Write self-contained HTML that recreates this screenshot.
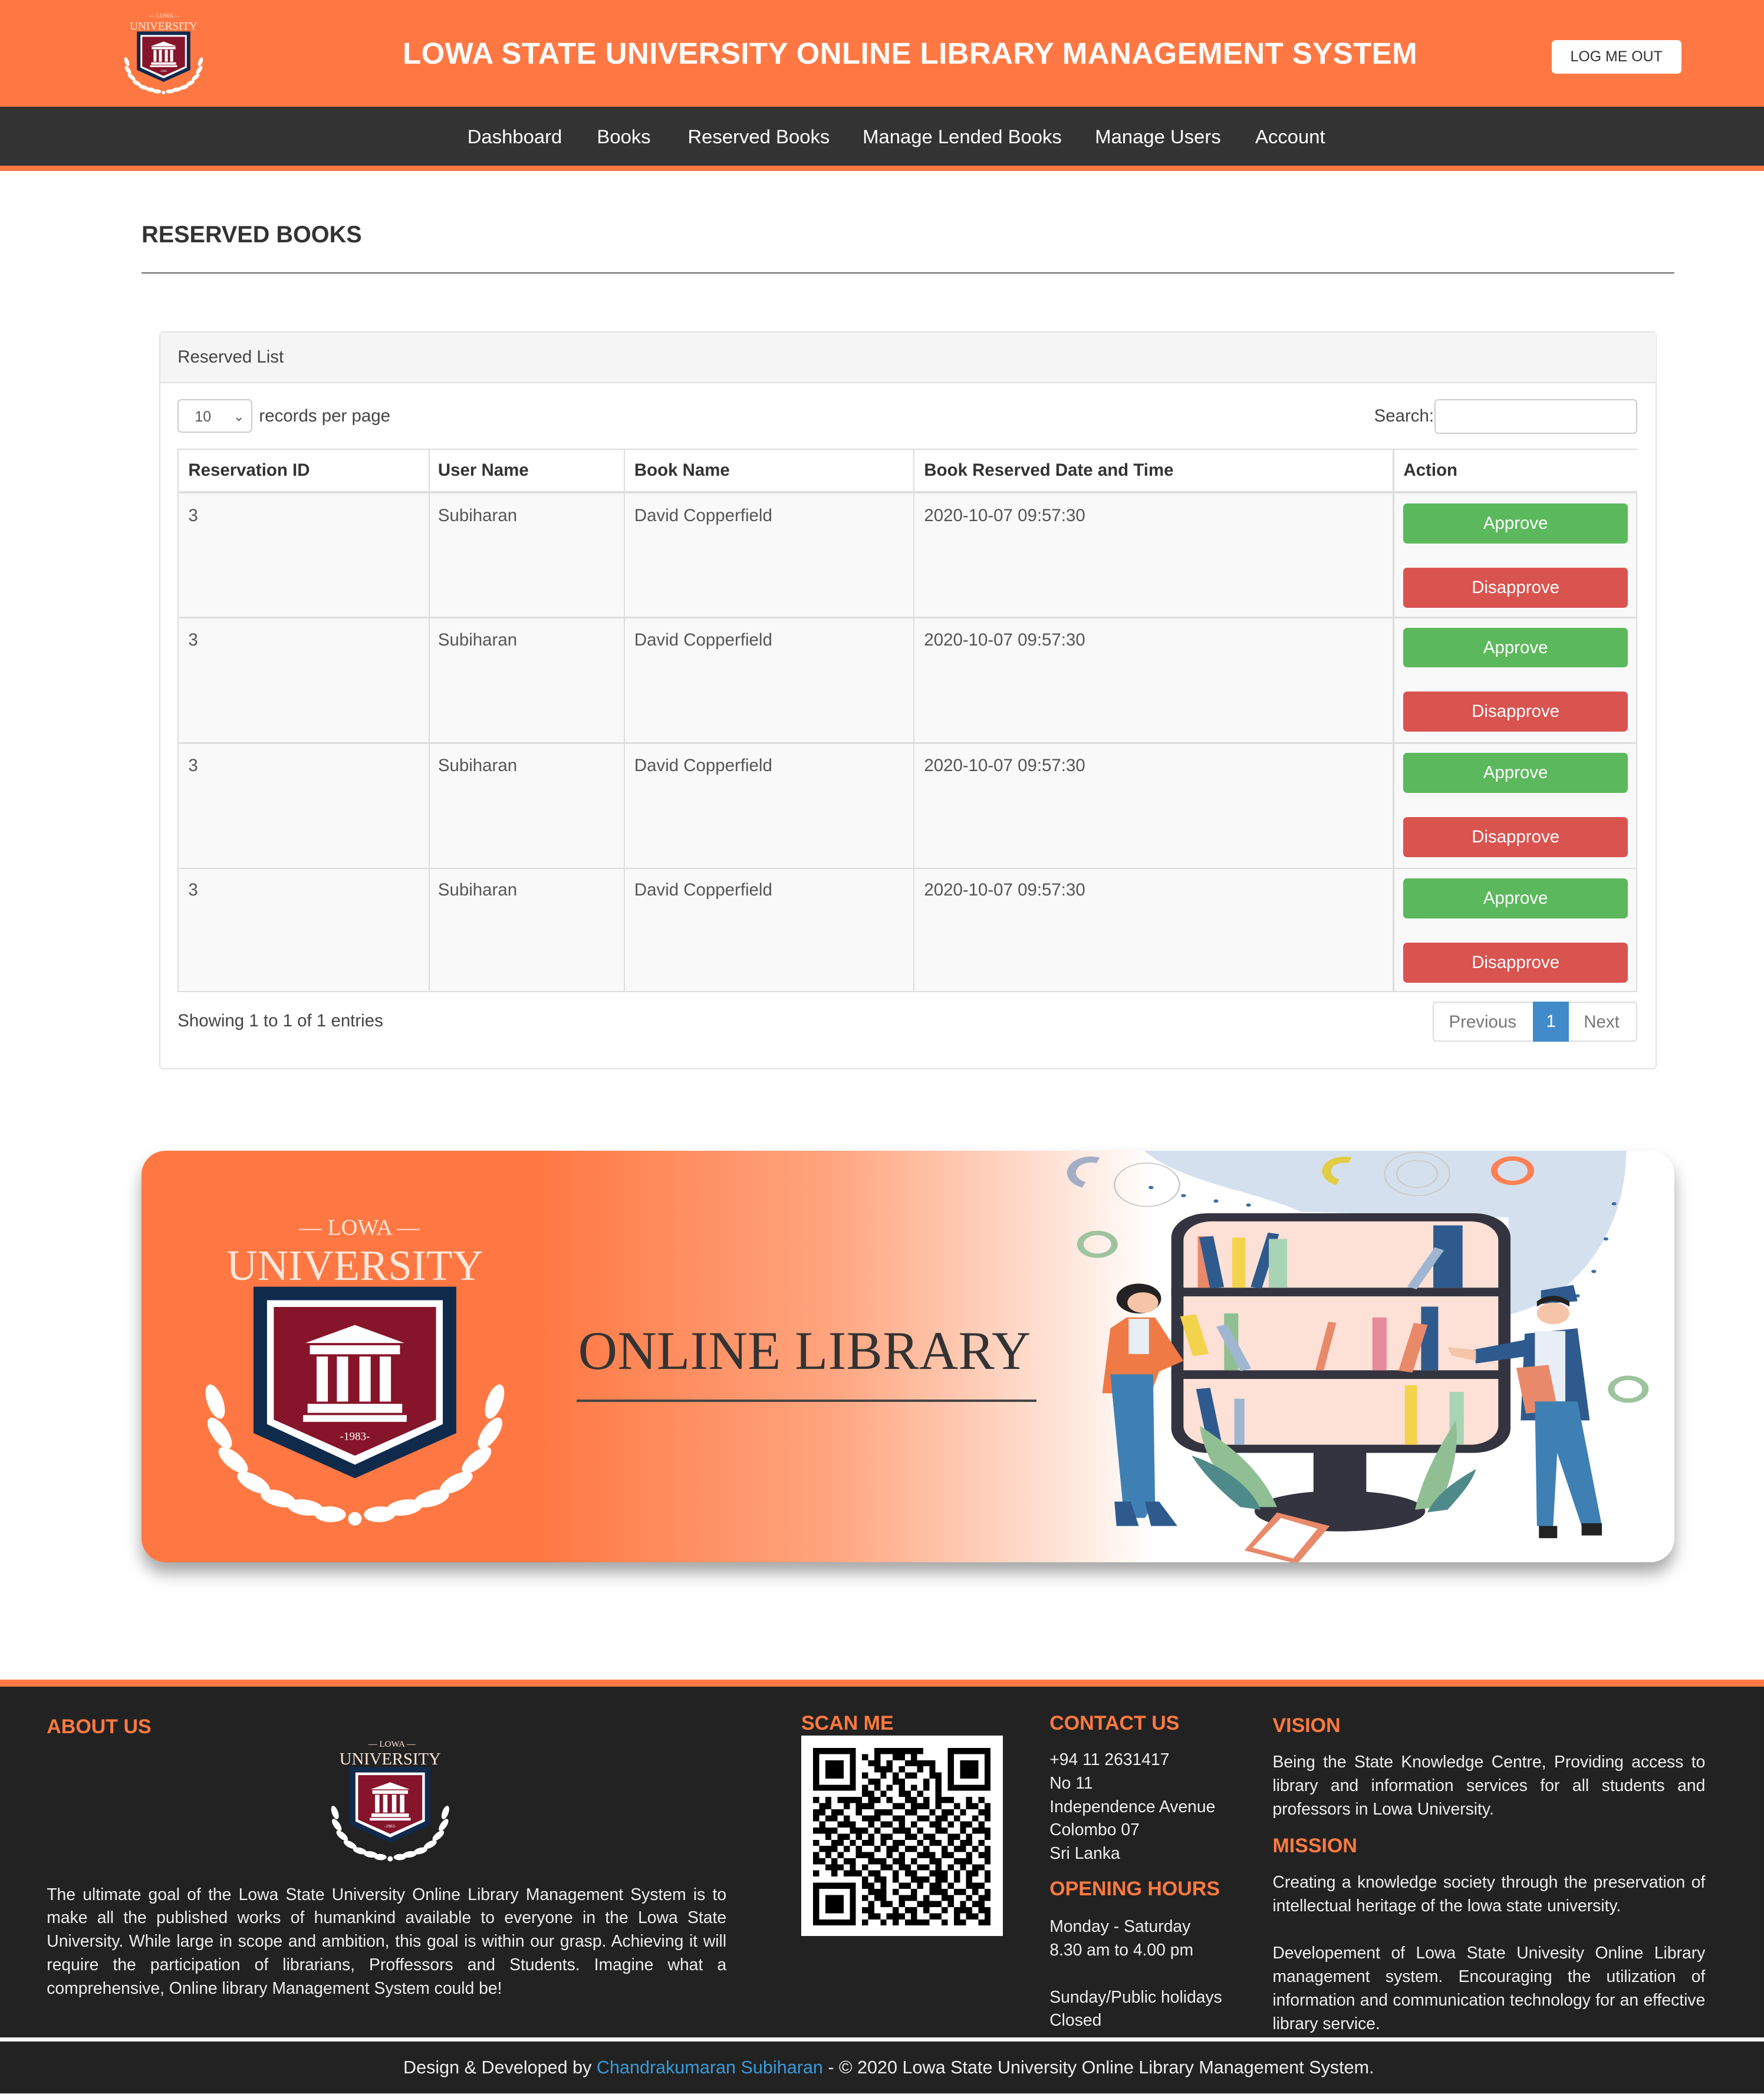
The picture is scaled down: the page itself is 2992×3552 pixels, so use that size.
<!DOCTYPE html>
<html><head><meta charset="utf-8">
<style>
html,body{margin:0;padding:0;width:2992px;height:3552px;overflow:hidden;background:#fff}
#w{position:relative;width:1321px;height:1568px;zoom:2.26495;font-family:"Liberation Sans",sans-serif;color:#333;overflow:hidden}
.a{position:absolute}
.nav span{position:absolute;top:93px;color:#fff;font-size:14.5px}
.cell{position:absolute;font-size:13px;color:#555}
.th{position:absolute;font-size:13px;font-weight:bold;color:#333;top:345px}
.btn{position:absolute;left:1051px;width:168px;height:30px;border-radius:3px;color:#fff;font-size:13px;text-align:center;line-height:30px}
.g{background:#5cb85c}.r{background:#d9534f}
.ft{position:absolute;color:#eee;font-size:12.5px;line-height:17.6px}
.oh{position:absolute;color:#ff7a40;font-weight:bold;font-size:15px}
</style></head><body><div id="w">

<svg width="0" height="0" style="position:absolute"><defs>
<g id="logo">
<text x="80" y="30" font-family="Liberation Serif,serif" font-size="10" fill="#fde8dc" text-anchor="middle">— LOWA —</text>
<text x="78" y="50" font-family="Liberation Serif,serif" font-size="19" fill="#fde8dc" text-anchor="middle">UNIVERSITY</text>
<path d="M33 53H123V118L78 138L33 118Z" fill="#102a4c"/>
<path d="M39 59H117V114L78 132L39 114Z" fill="#fff"/>
<path d="M42 62H114V112L78 128L42 112Z" fill="#86142a"/>
<path d="M78 70L100 78H56Z" fill="#fff"/><rect x="58" y="79" width="40" height="4" fill="#fff"/>
<rect x="61" y="84" width="5" height="20" fill="#fff"/><rect x="70" y="84" width="5" height="20" fill="#fff"/><rect x="80" y="84" width="5" height="20" fill="#fff"/><rect x="89" y="84" width="5" height="20" fill="#fff"/>
<rect x="57" y="105" width="42" height="4" fill="#fff"/><rect x="55" y="110" width="46" height="3" fill="#fff"/>
<text x="78" y="121" font-size="5" fill="#fff" text-anchor="middle" font-family="Liberation Serif,serif">-1983-</text>
<g fill="#fff">
<ellipse cx="16" cy="104" rx="3.5" ry="8" transform="rotate(-20 16 104)"/><ellipse cx="18" cy="118" rx="3.5" ry="8" transform="rotate(-35 18 118)"/><ellipse cx="24" cy="130" rx="3.5" ry="8" transform="rotate(-50 24 130)"/><ellipse cx="33" cy="140" rx="3.5" ry="8" transform="rotate(-62 33 140)"/><ellipse cx="44" cy="147" rx="3.5" ry="8" transform="rotate(-75 44 147)"/><ellipse cx="56" cy="151" rx="3.5" ry="8" transform="rotate(-82 56 151)"/><ellipse cx="67" cy="154" rx="3.5" ry="7" transform="rotate(-88 67 154)"/>
<ellipse cx="140" cy="104" rx="3.5" ry="8" transform="rotate(20 140 104)"/><ellipse cx="138" cy="118" rx="3.5" ry="8" transform="rotate(35 138 118)"/><ellipse cx="132" cy="130" rx="3.5" ry="8" transform="rotate(50 132 130)"/><ellipse cx="123" cy="140" rx="3.5" ry="8" transform="rotate(62 123 140)"/><ellipse cx="112" cy="147" rx="3.5" ry="8" transform="rotate(75 112 147)"/><ellipse cx="100" cy="151" rx="3.5" ry="8" transform="rotate(82 100 151)"/><ellipse cx="89" cy="154" rx="3.5" ry="7" transform="rotate(88 89 154)"/>
<circle cx="78" cy="156" r="3"/></g>
</g></defs></svg>

<!-- header -->
<div class="a" style="left:0;top:0;width:1321px;height:80px;background:#ff7843"></div>
<svg class="a" style="left:88px;top:0" width="80" height="80" viewBox="0 0 180 180"><use href="#logo"/></svg>
<div class="a" style="left:200px;width:963px;top:27px;text-align:center;color:#fff;font-weight:bold;font-size:22.5px;letter-spacing:0.2px">LOWA STATE UNIVERSITY ONLINE LIBRARY MANAGEMENT SYSTEM</div>
<div class="a" style="left:1162px;top:30px;width:97px;height:25px;background:#fff;border-radius:3px;font-size:11px;text-align:center;line-height:25px;color:#333">LOG ME OUT</div>
<div class="a nav" style="left:0;top:80px;width:1321px;height:44px;background:#333">
<span style="left:350px;top:14px">Dashboard</span><span style="left:447px;top:14px">Books</span><span style="left:515px;top:14px">Reserved Books</span><span style="left:646px;top:14px">Manage Lended Books</span><span style="left:820px;top:14px">Manage Users</span><span style="left:940px;top:14px">Account</span></div>
<div class="a" style="left:0;top:124px;width:1321px;height:4px;background:#ff7843"></div>

<div class="a" style="left:106px;top:166px;font-size:17.5px;font-weight:bold;color:#333">RESERVED BOOKS</div>
<div class="a" style="left:106px;top:204px;width:1148px;height:1px;background:#666"></div>

<!-- panel -->
<div class="a" style="left:119px;top:248px;width:1120px;height:551px;border:1px solid #e2e2e2;border-radius:3px"></div>
<div class="a" style="left:120px;top:249px;width:1120px;height:37px;background:#f5f5f5;border-bottom:1px solid #e2e2e2"></div>
<div class="a" style="left:133px;top:260px;font-size:13px;color:#444">Reserved List</div>
<div class="a" style="left:133px;top:299px;width:56px;height:25px;border:1px solid #ccc;border-radius:3px;font-size:11px;color:#555;line-height:25px;box-sizing:border-box;padding-left:12px">10<span style="position:absolute;right:5px;font-size:10px">⌄</span></div>
<div class="a" style="left:194px;top:304px;font-size:13px;color:#444">records per page</div>
<div class="a" style="left:1029px;top:304px;font-size:13px;color:#444">Search:</div>
<div class="a" style="left:1074px;top:299px;width:152px;height:26px;border:1px solid #ccc;border-radius:3px;box-sizing:border-box"></div>

<!-- table -->
<div class="a" style="left:133px;top:336px;width:1093px;height:407px;border:1px solid #ddd;box-sizing:border-box;background:#f9f9f9"></div>
<div class="a" style="left:134px;top:337px;width:1092px;height:31px;background:#fff;border-bottom:2px solid #ddd"></div>
<div class="a" style="left:134px;top:462px;width:1092px;height:1px;background:#ddd"></div>
<div class="a" style="left:134px;top:556px;width:1092px;height:1px;background:#ddd"></div>
<div class="a" style="left:134px;top:650px;width:1092px;height:1px;background:#ddd"></div>
<div class="a" style="left:321px;top:336px;width:1px;height:407px;background:#ddd"></div>
<div class="a" style="left:467px;top:336px;width:1px;height:407px;background:#ddd"></div>
<div class="a" style="left:684px;top:336px;width:1px;height:407px;background:#ddd"></div>
<div class="a" style="left:1043px;top:336px;width:1px;height:407px;background:#ddd"></div>
<div class="th" style="left:141px">Reservation ID</div><div class="th" style="left:328px">User Name</div><div class="th" style="left:475px">Book Name</div><div class="th" style="left:692px">Book Reserved Date and Time</div><div class="th" style="left:1051px">Action</div>

<div class="cell" style="left:141px;top:379px">3</div><div class="cell" style="left:328px;top:379px">Subiharan</div><div class="cell" style="left:475px;top:379px">David Copperfield</div><div class="cell" style="left:692px;top:379px">2020-10-07 09:57:30</div>
<div class="btn g" style="top:377px">Approve</div><div class="btn r" style="top:425px">Disapprove</div>
<div class="cell" style="left:141px;top:472px">3</div><div class="cell" style="left:328px;top:472px">Subiharan</div><div class="cell" style="left:475px;top:472px">David Copperfield</div><div class="cell" style="left:692px;top:472px">2020-10-07 09:57:30</div>
<div class="btn g" style="top:470px">Approve</div><div class="btn r" style="top:518px">Disapprove</div>
<div class="cell" style="left:141px;top:566px">3</div><div class="cell" style="left:328px;top:566px">Subiharan</div><div class="cell" style="left:475px;top:566px">David Copperfield</div><div class="cell" style="left:692px;top:566px">2020-10-07 09:57:30</div>
<div class="btn g" style="top:564px">Approve</div><div class="btn r" style="top:612px">Disapprove</div>
<div class="cell" style="left:141px;top:659px">3</div><div class="cell" style="left:328px;top:659px">Subiharan</div><div class="cell" style="left:475px;top:659px">David Copperfield</div><div class="cell" style="left:692px;top:659px">2020-10-07 09:57:30</div>
<div class="btn g" style="top:658px">Approve</div><div class="btn r" style="top:706px">Disapprove</div>

<div class="a" style="left:133px;top:757px;font-size:13px;color:#444">Showing 1 to 1 of 1 entries</div>
<div class="a" style="left:1073px;top:750px;width:153px;height:30px;border:1px solid #ddd;border-radius:3px;box-sizing:border-box"></div>
<div class="a" style="left:1085px;top:758px;font-size:13px;color:#777">Previous</div>
<div class="a" style="left:1148px;top:750px;width:27px;height:30px;background:#428bca;color:#fff;font-size:13px;text-align:center;line-height:30px">1</div>
<div class="a" style="left:1186px;top:758px;font-size:13px;color:#777">Next</div>

<!-- banner -->
<div class="a" style="left:106px;top:862px;width:1148px;height:308px;border-radius:18px;overflow:hidden;box-shadow:0 8px 12px rgba(0,0,0,0.35);background:linear-gradient(90deg,#ff7843 0%,#ff7843 26%,#ffa57f 45%,#ffe4d8 60%,#fff 66%,#fff 100%)">
<svg class="a" style="left:28px;top:12px" width="264" height="270" viewBox="0 0 156 160"><use href="#logo"/></svg>
<div class="a" style="left:327px;top:126px;font-family:'Liberation Serif',serif;font-size:40.5px;color:#333;letter-spacing:0.2px">ONLINE LIBRARY</div>
<div class="a" style="left:326px;top:186px;width:344px;height:2px;background:#444"></div>
<svg class="a" style="left:680px;top:-1px" width="477" height="318" viewBox="0 0 1568 1568" preserveAspectRatio="none">
<path d="M230 0H1420C1420 300 1300 550 1130 610V250L620 230C500 150 320 120 230 0Z" fill="#d4e0ee"/>
<g fill="#3b6ea5"><circle cx="250" cy="140" r="6"/><circle cx="330" cy="170" r="6"/><circle cx="410" cy="190" r="6"/><circle cx="490" cy="205" r="6"/><circle cx="1390" cy="200" r="6"/><circle cx="1370" cy="330" r="6"/><circle cx="1340" cy="450" r="6"/><circle cx="1300" cy="540" r="6"/><circle cx="1230" cy="620" r="6"/></g>
<circle cx="240" cy="130" r="80" fill="none" stroke="#ccc" stroke-width="4"/><circle cx="905" cy="90" r="80" fill="none" stroke="#ccc" stroke-width="4"/><circle cx="905" cy="90" r="50" fill="none" stroke="#ccc" stroke-width="4"/>
<circle cx="118" cy="350" r="42" fill="none" stroke="#9ec39f" stroke-width="16"/><circle cx="1425" cy="885" r="42" fill="none" stroke="#9ec39f" stroke-width="16"/><circle cx="1140" cy="78" r="45" fill="none" stroke="#ff8055" stroke-width="16"/>
<path d="M740 40A40 40 0 1 0 710 120" fill="none" stroke="#e2cc44" stroke-width="22"/><path d="M120 40A40 40 0 1 0 85 130" fill="none" stroke="#a3aec6" stroke-width="22"/>
<rect x="300" y="235" width="835" height="885" rx="90" fill="#343440"/><rect x="330" y="265" width="775" height="825" rx="70" fill="#fde0d6"/>
<rect x="300" y="510" width="835" height="32" fill="#343440"/><rect x="300" y="815" width="835" height="32" fill="#343440"/>
<rect x="650" y="1120" width="130" height="170" fill="#343440"/><ellipse cx="715" cy="1335" rx="210" ry="75" fill="#343440"/>
<rect x="365" y="320" width="38" height="190" fill="#e8896a"/><rect x="395" y="320" width="35" height="190" fill="#2e5a8e" transform="rotate(-8 412 510)"/><rect x="450" y="325" width="32" height="185" fill="#f2d34b"/><rect x="495" y="305" width="28" height="205" fill="#2e5a8e" transform="rotate(12 509 510)"/><rect x="540" y="330" width="45" height="180" fill="#a8d3b4"/><rect x="945" y="280" width="72" height="230" fill="#2e5a8e"/><rect x="880" y="350" width="25" height="160" fill="#9fb6d0" transform="rotate(25 890 510)"/>
<rect x="430" y="605" width="35" height="210" fill="#8fbf93"/><rect x="470" y="640" width="28" height="175" fill="#9fb6d0" transform="rotate(-20 480 815)"/><rect x="795" y="620" width="35" height="195" fill="#e78a9c"/><rect x="915" y="580" width="42" height="235" fill="#2e5a8e"/><rect x="860" y="640" width="35" height="180" fill="#e8896a" transform="rotate(12 878 815)"/><rect x="655" y="635" width="20" height="180" fill="#e8896a" transform="rotate(10 665 815)"/>
<rect x="390" y="880" width="35" height="210" fill="#2e5a8e" transform="rotate(-8 408 1090)"/><rect x="455" y="920" width="25" height="170" fill="#9fb6d0"/><rect x="875" y="870" width="30" height="220" fill="#f2d34b"/><rect x="985" y="895" width="35" height="195" fill="#a8d3b4"/>
<path d="M370 1020C450 1100 520 1180 560 1320L500 1320C420 1230 380 1130 370 1020Z" fill="#8fbf93"/><path d="M350 1130C430 1170 500 1250 520 1330L470 1320C420 1260 380 1200 350 1130Z" fill="#4f8a8b"/>
<path d="M1000 1000C960 1100 920 1200 900 1330L960 1320C990 1220 1010 1100 1000 1000Z" fill="#8fbf93"/><path d="M1050 1180C990 1230 950 1280 930 1340L980 1330C1010 1280 1040 1230 1050 1180Z" fill="#4f8a8b"/>
<path d="M480 1480L560 1340L690 1390L610 1530Z" fill="#e8896a"/><path d="M500 1470L570 1360L660 1400L600 1510Z" fill="#fff"/>
<circle cx="220" cy="550" r="55" fill="#222"/><circle cx="230" cy="565" r="38" fill="#f6c4a8"/>
<path d="M190 620L260 620L330 780L270 820L250 900L130 900L150 660Z" fill="#f07a45"/><rect x="195" y="625" width="50" height="130" fill="#e8eef5"/>
<path d="M150 830H255L260 1300L235 1360L200 1360L180 1300Z" fill="#3f80b4"/><path d="M160 1300L200 1300L220 1390L165 1390Z" fill="#2e5a8e"/><path d="M235 1300L270 1300L315 1390L250 1390Z" fill="#2e5a8e"/>
<rect x="340" y="610" width="40" height="150" fill="#f2d34b" transform="rotate(-12 360 700)"/>
<path d="M1210 520L1290 500L1300 560L1210 570Z" fill="#2e5a8e"/><circle cx="1240" cy="605" r="40" fill="#f6c4a8"/><path d="M1200 580Q1240 540 1280 580L1280 560Q1240 520 1200 560Z" fill="#222"/>
<path d="M1170 680L1300 660L1330 1000L1160 1000Z" fill="#2e5a8e"/><rect x="1195" y="670" width="75" height="260" fill="#e8eef5"/>
<path d="M1040 740L1180 700L1190 760L1050 790Z" fill="#2e5a8e"/><path d="M980 730L1050 740L1050 780L990 760Z" fill="#f6c4a8"/>
<rect x="1160" y="800" width="80" height="170" fill="#e8896a" transform="rotate(-8 1200 880)"/>
<path d="M1195 930H1300L1360 1390L1310 1390L1250 1120L1240 1390L1200 1390Z" fill="#3f80b4"/><rect x="1205" y="1390" width="45" height="45" fill="#222"/><rect x="1310" y="1380" width="50" height="45" fill="#222"/>
</svg>
</div>

<!-- footer -->
<div class="a" style="left:0;top:1258px;width:1321px;height:5px;background:#ff7843"></div>
<div class="a" style="left:0;top:1263px;width:1321px;height:305px;background:#222"></div>
<div class="a" style="left:0;top:1526px;width:1321px;height:3px;background:#f2f2f2"></div>
<div class="oh" style="left:35px;top:1285px">ABOUT US</div>
<svg class="a" style="left:240px;top:1286px" width="104" height="114" viewBox="0 0 156 165"><use href="#logo"/></svg>
<div class="ft" style="left:35px;top:1410px;width:509px;text-align:justify">The ultimate goal of the Lowa State University Online Library Management System is to make all the published works of humankind available to everyone in the Lowa State University. While large in scope and ambition, this goal is within our grasp. Achieving it will require the participation of librarians, Proffessors and Students. Imagine what a comprehensive, Online library Management System could be!</div>
<div class="oh" style="left:600px;top:1282px">SCAN ME</div>
<div class="a" style="left:600px;top:1300px;width:151px;height:150px;background:#fff"></div>
<svg id="qr" class="a" style="left:609px;top:1309px" width="133" height="133" viewBox="0 0 29 29" shape-rendering="crispEdges"></svg>
<div class="oh" style="left:786px;top:1282px">CONTACT US</div>
<div class="ft" style="left:786px;top:1309px">+94 11 2631417<br>No 11<br>Independence Avenue<br>Colombo 07<br>Sri Lanka</div>
<div class="oh" style="left:786px;top:1406px">OPENING HOURS</div>
<div class="ft" style="left:786px;top:1434px">Monday - Saturday<br>8.30 am to 4.00 pm<br><br>Sunday/Public holidays<br>Closed</div>
<div class="oh" style="left:953px;top:1284px">VISION</div>
<div class="ft" style="left:953px;top:1311px;width:324px;text-align:justify">Being the State Knowledge Centre, Providing access to library and information services for all students and professors in Lowa University.</div>
<div class="oh" style="left:953px;top:1374px">MISSION</div>
<div class="ft" style="left:953px;top:1401px;width:324px;text-align:justify">Creating a knowledge society through the preservation of intellectual heritage of the lowa state university.</div>
<div class="ft" style="left:953px;top:1454px;width:324px;text-align:justify">Developement of Lowa State Univesity Online Library management system. Encouraging the utilization of information and communication technology for an effective library service.</div>
<div class="a" style="left:0;top:1541px;width:1331px;text-align:center;color:#eee;font-size:13.5px">Design &amp; Developed by <span style="color:#3a9ad9">Chandrakumaran Subiharan</span> - © 2020 Lowa State University Online Library Management System.</div>
</div>
<script>
(function(){
var F=["1111111","1000001","1011101","1011101","1011101","1000001","1111111"];
var M=["0011111111000","1010011010000","0110100111110","0011101001010","1001010110011","0110011000101","1010101010101"];
var rows=[];
for(var i=0;i<7;i++)rows.push(F[i]+"0"+M[i]+"0"+F[i]);
rows.push("00000000"+"1101001101001"+"00000000");
var mid=["10101111011010011010111001010","01100101110001101110100101101","11011001001110011001011010011","10110100111001100110110100101","01001110010110101001101011010","11110011101001110100110010111","00101101010110011011001101001","10011010110101100101101011010","01110101001011011010010110101","10101001110010100111011001011","11010110011101101001100111001","00111010100110110110101010110","10010111011001011001110101101"];
rows=rows.concat(mid);
var B=["000000001101001011101100","110100110101101001110","011101001001110110101","101100111010011001011","010110100111101010110","110001011010010111011","011011101001100101101","100101011110010110011"];
rows.push("00000000"+"101101001110110101001");
for(var i=0;i<7;i++)rows.push(F[i]+"0"+B[i+1]);
var s="";
for(var y=0;y<29;y++){var r=rows[y]||"";for(var x=0;x<29;x++){if(r.charAt(x)==="1")s+='<rect x="'+x+'" y="'+y+'" width="1" height="1"/>';}}
document.getElementById("qr").innerHTML=s;
})();
</script>
</body></html>
